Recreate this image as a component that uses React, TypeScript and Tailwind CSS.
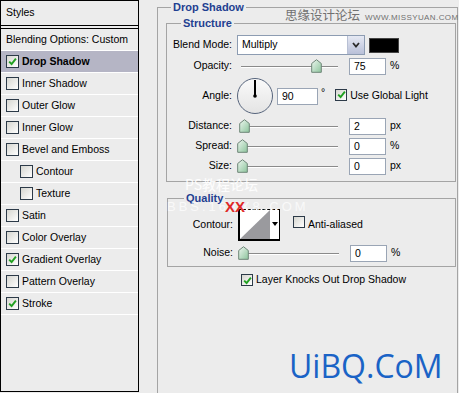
const font = "font-['Liberation_Sans',Arial,sans-serif]";

type CheckProps = { on?: boolean; big?: boolean };

function Check({ on, big }: CheckProps) {
  return (
    <span
      className={`inline-flex shrink-0 items-center justify-center border border-[#2c3a48] bg-linear-to-br from-[#d6d6d0] to-white ${
        big ? "w-[13px] h-[13px]" : "w-[12px] h-[12px]"
      }`}
    >
      {on && (
        <svg viewBox="0 0 9 9" className="w-[9px] h-[9px]">
          <path d="M1.2 4.6 L3.6 7 L7.9 1.6" stroke="#21a121" strokeWidth="1.9" fill="none" />
        </svg>
      )}
    </span>
  );
}

function Thumb() {
  return (
    <svg viewBox="0 0 11 14" className="w-[11px] h-[14px]">
      <defs>
        <linearGradient id="tg" x1="0" y1="0" x2="1" y2="1">
          <stop offset="0" stopColor="#eef7f0" />
          <stop offset="1" stopColor="#8cc49c" />
        </linearGradient>
      </defs>
      <path d="M5.5 0.7 L10.3 4.5 L10.3 13.3 L0.7 13.3 L0.7 4.5 Z" fill="url(#tg)" stroke="#6d8577" strokeWidth="1" />
    </svg>
  );
}

function Slider({ at }: { at: number }) {
  return (
    <div className="relative ml-[5px] w-[112px] h-[20px] shrink-0">
      <div className="absolute left-[4px] top-[10px] w-[97px] h-[2px] border-t border-[#8a8a8a] border-b border-b-white" />
      <div className="absolute top-[3px]" style={{ left: at }}>
        <Thumb />
      </div>
    </div>
  );
}

function Field({ value, w = "w-[37px]" }: { value: string; w?: string }) {
  return (
    <div className={`${w} h-[17px] shrink-0 border border-[#9aa5b5] bg-white pl-[4px] flex items-center leading-none`}>
      {value}
    </div>
  );
}

function Label({ children }: { children: React.ReactNode }) {
  return <div className="w-[65px] shrink-0 text-right">{children}</div>;
}

function SliderRow({ label, at, value, unit }: { label: string; at: number; value: string; unit: string }) {
  return (
    <div className="flex items-center h-[20px]">
      <Label>{label}</Label>
      <Slider at={at} />
      <Field value={value} />
      <span className="ml-[4px]">{unit}</span>
    </div>
  );
}

const styles: { name: string; on?: boolean; sel?: boolean; sub?: boolean }[] = [
  { name: "Drop Shadow", on: true, sel: true },
  { name: "Inner Shadow" },
  { name: "Outer Glow" },
  { name: "Inner Glow" },
  { name: "Bevel and Emboss" },
  { name: "Contour", sub: true },
  { name: "Texture", sub: true },
  { name: "Satin" },
  { name: "Color Overlay" },
  { name: "Gradient Overlay", on: true },
  { name: "Pattern Overlay" },
  { name: "Stroke", on: true },
];

function StyleList() {
  return (
    <div className="w-[139px] h-[392px] shrink-0 border border-black flex flex-col bg-[#ececec]">
      <div className="h-[24px] flex items-center pl-[5px]">Styles</div>
      <div className="h-[4px] border-y border-black" />
      <div className="h-[22px] flex items-center pl-[5px] border-b border-white">Blending Options: Custom</div>
      {styles.map((s) => (
        <div
          key={s.name}
          className={`h-[22px] flex items-center border-b border-white ${s.sub ? "pl-[19px]" : "pl-[5px]"} ${
            s.sel ? "bg-[#b5b5c5] font-bold" : ""
          }`}
        >
          <Check on={s.on} big />
          <span className="ml-[3px]">{s.name}</span>
        </div>
      ))}
    </div>
  );
}

export default function App() {
  return (
    <div className={`relative w-[459px] h-[393px] overflow-hidden bg-[#ececec] flex text-[10.5px] text-black ${font}`}>
      <StyleList />

      <fieldset className="ml-[18px] w-[301px] h-[420px] shrink-0 border border-[#a4a4a4] p-0">
        <legend className="ml-[13px] px-[2px] font-bold text-[#1f3f91] leading-[14px] text-[11px]">Drop Shadow</legend>

        <fieldset className="ml-[8px] mt-[2px] w-[290px] border border-[#a4a4a4] p-0 pb-[5px]">
          <legend className="ml-[14px] px-[2px] font-bold text-[#1f3f91] leading-[14px] text-[11px]">Structure</legend>

          <div className="mt-[4px] h-[22px] flex items-center">
            <Label>Blend Mode:</Label>
            <div className="ml-[5px] w-[128px] h-[20px] border border-[#8d9cb2] bg-white flex items-center">
              <span className="flex-1 pl-[4px]">Multiply</span>
              <div className="w-[17px] h-full border-l border-[#b8c0d4] bg-linear-to-b from-[#e6e9f3] to-[#b9c0d8] flex items-center justify-center">
                <svg viewBox="0 0 8 6" className="w-[8px] h-[6px]">
                  <path d="M1 1 L4 4.5 L7 1" stroke="#2b2b2b" strokeWidth="1.8" fill="none" />
                </svg>
              </div>
            </div>
            <div className="ml-[4px] w-[30px] h-[15px] bg-black border border-[#444]" />
          </div>

          <SliderRow label="Opacity:" at={74} value="75" unit="%" />

          <div className="flex items-center h-[40px]">
            <Label>Angle:</Label>
            <div className="ml-[5px] w-[36px] h-[36px] shrink-0 rounded-full border-[1.5px] border-[#56647c] bg-linear-to-b from-[#fafafa] to-[#e4e4e4] relative">
              <svg viewBox="0 0 36 36" className="absolute -left-[1.5px] -top-[1.5px] w-[36px] h-[36px]">
                <line x1="18" y1="18" x2="18" y2="2" stroke="#000" strokeWidth="2" />
                <circle cx="18" cy="18" r="1.8" fill="#000" />
              </svg>
            </div>
            <div className="ml-[4px]">
              <Field value="90" w="w-[41px]" />
            </div>
            <span className="ml-[3px] -mt-[6px]">°</span>
            <span className="ml-[10px]">
              <Check on />
            </span>
            <span className="ml-[3px]">Use Global Light</span>
          </div>

          <SliderRow label="Distance:" at={2} value="2" unit="px" />
          <SliderRow label="Spread:" at={0} value="0" unit="%" />
          <SliderRow label="Size:" at={0} value="0" unit="px" />
        </fieldset>

        <fieldset className="ml-[9px] mt-[9px] w-[289px] border border-[#a4a4a4] p-0 pb-[3px]">
          <legend className="ml-[16px] px-[2px] font-bold text-[#1f3f91] leading-[14px] text-[11px]">Quality</legend>

          <div className="mt-[3px] h-[33px] flex items-center">
            <Label>Contour:</Label>
            <div className="ml-[5px] w-[42px] h-[32px] shrink-0 flex border-l-2 border-b-2 border-r border-t border-black [border-top-style:dashed] bg-white">
              <svg viewBox="0 0 30 30" preserveAspectRatio="none" className="w-[30px] h-full">
                <polygon points="0,30 30,0 30,30" fill="#9a9a9e" />
              </svg>
              <div className="flex-1 flex items-center justify-center">
                <svg viewBox="0 0 6 4" className="w-[6px] h-[4px]">
                  <path d="M0 0 L6 0 L3 4 Z" fill="#000" />
                </svg>
              </div>
            </div>
            <span className="ml-[13px]">
              <Check />
            </span>
            <span className="ml-[3px]">Anti-aliased</span>
          </div>

          <div className="mt-[2px]">
            <SliderRow label="Noise:" at={0} value="0" unit="%" />
          </div>
        </fieldset>

        <div className="mt-[6px] ml-[83px] h-[14px] flex items-center">
          <Check on />
          <span className="ml-[3px]">Layer Knocks Out Drop Shadow</span>
        </div>
      </fieldset>

      <div className="absolute left-[285px] top-[8px] flex items-baseline text-[#707070]">
        <span className="text-[12.5px] font-['Noto_Sans_CJK_SC',sans-serif] leading-[14px]">思缘设计论坛</span>
        <span className="ml-[5px] text-[8px] tracking-[0.4px]">WWW.MISSYUAN.COM</span>
      </div>

      <div className="absolute left-[185px] top-[176px] text-white/90 text-[14px] leading-[16px] font-['Noto_Sans_CJK_SC',sans-serif]">
        PS教程论坛
      </div>
      <div className="absolute left-[167px] top-[200px] text-[13px] leading-[14px] text-white/70 tracking-[3px]">
        BBS.16XX8.COM
      </div>
      <div className="absolute left-[225px] top-[199px] text-[#e02828] font-bold text-[15px] leading-[16px]">XX</div>

      <div className="absolute left-[289px] top-[350px] text-[32px] leading-none text-[#1a63c6] font-['Open_Sans',sans-serif]">
        UiBQ.CoM
      </div>
    </div>
  );
}
